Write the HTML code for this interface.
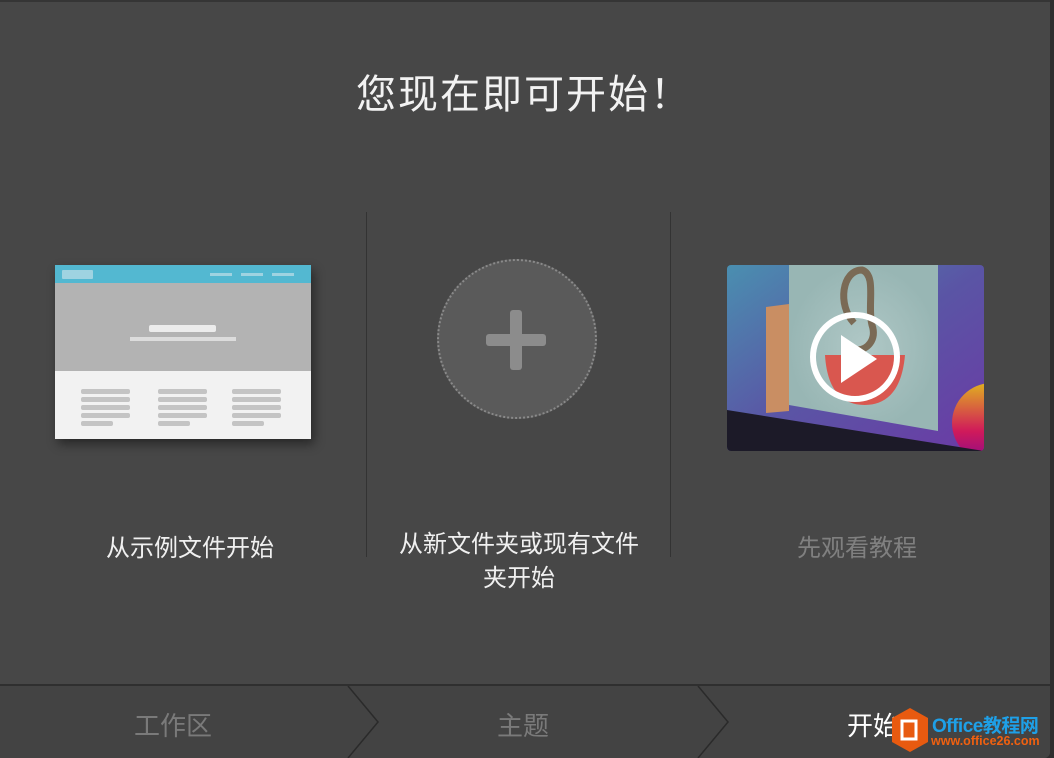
<!DOCTYPE html>
<html><head><meta charset="utf-8">
<style>
*{margin:0;padding:0;box-sizing:border-box}
html,body{width:1054px;height:758px;overflow:hidden}
body{background:#2e2e2e;font-family:"Liberation Sans","Noto Sans CJK SC",sans-serif;position:relative}
.main{position:absolute;left:0;top:0;width:1050px;height:758px;background:#474747;border-radius:0 0 6px 0;overflow:hidden}
.abs{position:absolute;white-space:nowrap}
.title{left:356px;top:62px;color:#f2f2f2;font-size:40px;letter-spacing:2px}
.vline{width:1px;background:#333;top:212px;height:345px}
.lbl{color:#f0f0f0;font-size:24px;text-align:center}
.mock{left:55px;top:265px;width:256px;height:174px;box-shadow:3px 5px 10px rgba(0,0,0,.45)}
.ln{position:absolute;height:5px;background:#c4c4c4;border-radius:2px}
.bar{left:0;top:684px;width:1050px;height:74px;background:#434343;border-top:2px solid #2f2f2f}
.tab{font-size:26px;color:#7a7a7a;top:706px}
</style></head><body>
<div class="main">
<div class="abs" style="left:0;top:0;width:1050px;height:2px;background:#353535"></div>
<div class="abs title">您现在即可开始！</div>
<div class="abs vline" style="left:366px"></div>
<div class="abs vline" style="left:670px"></div>

<div class="abs mock">
 <div class="abs" style="left:0;top:0;width:256px;height:18px;background:#53b8d1"></div>
 <div class="abs" style="left:7px;top:5px;width:31px;height:9px;background:#9fd3e1;border-radius:1px"></div>
 <div class="abs" style="left:155px;top:8px;width:22px;height:3px;background:#9fd3e1"></div>
 <div class="abs" style="left:186px;top:8px;width:22px;height:3px;background:#9fd3e1"></div>
 <div class="abs" style="left:217px;top:8px;width:22px;height:3px;background:#9fd3e1"></div>
 <div class="abs" style="left:0;top:18px;width:256px;height:88px;background:#b3b3b3"></div>
 <div class="abs" style="left:94px;top:60px;width:67px;height:7px;background:#ececec;border-radius:2px"></div>
 <div class="abs" style="left:75px;top:72px;width:106px;height:4px;background:#dcdcdc"></div>
 <div class="abs" style="left:0;top:106px;width:256px;height:68px;background:#f2f2f2"></div>
 <div class="ln" style="left:26px;top:124px;width:49px"></div><div class="ln" style="left:26px;top:132px;width:49px"></div><div class="ln" style="left:26px;top:140px;width:49px"></div><div class="ln" style="left:26px;top:148px;width:49px"></div><div class="ln" style="left:26px;top:156px;width:32px"></div>
 <div class="ln" style="left:103px;top:124px;width:49px"></div><div class="ln" style="left:103px;top:132px;width:49px"></div><div class="ln" style="left:103px;top:140px;width:49px"></div><div class="ln" style="left:103px;top:148px;width:49px"></div><div class="ln" style="left:103px;top:156px;width:32px"></div>
 <div class="ln" style="left:177px;top:124px;width:49px"></div><div class="ln" style="left:177px;top:132px;width:49px"></div><div class="ln" style="left:177px;top:140px;width:49px"></div><div class="ln" style="left:177px;top:148px;width:49px"></div><div class="ln" style="left:177px;top:156px;width:32px"></div>
</div>
<div class="abs lbl" style="left:60px;width:260px;top:528px">从示例文件开始</div>

<div class="abs" style="left:437px;top:259px;width:160px;height:160px;border-radius:50%;background:#5a5a5a;border:2px dotted #8a8a8a"></div>
<div class="abs" style="left:486px;top:334px;width:60px;height:12px;background:#8c8c8c;border-radius:3px"></div>
<div class="abs" style="left:510px;top:310px;width:12px;height:60px;background:#8c8c8c;border-radius:3px"></div>
<div class="abs lbl" style="left:388px;width:262px;top:528px;line-height:34px;white-space:normal">从新文件夹或现有文件<br>夹开始</div>

<svg class="abs" style="left:727px;top:265px" width="257" height="186" viewBox="0 0 257 186">
<defs>
<linearGradient id="g1" x1="0" y1="0" x2="1" y2="1"><stop offset="0" stop-color="#4a8fb0"/><stop offset=".5" stop-color="#5a55a5"/><stop offset="1" stop-color="#6b3aa5"/></linearGradient>
<radialGradient id="g2" cx=".5" cy=".5" r=".5"><stop offset="0" stop-color="#b0c8c6"/><stop offset="1" stop-color="#98b6b4"/></radialGradient>
<linearGradient id="g3" x1="0" y1="0" x2="0" y2="1"><stop offset="0" stop-color="#e0b020"/><stop offset=".6" stop-color="#d01a5a"/><stop offset="1" stop-color="#8a0a8a"/></linearGradient>
<clipPath id="c"><rect width="257" height="186" rx="4"/></clipPath></defs>
<g clip-path="url(#c)">
<rect width="257" height="186" fill="url(#g1)"/>
<polygon points="62,0 211,0 211,166 62,140" fill="url(#g2)"/>
<polygon points="39,42 62,39 62,146 39,148" fill="#c98e63"/>
<circle cx="265" cy="158" r="40" fill="url(#g3)"/>
<polygon points="0,145 257,186 0,186" fill="#1c1a28"/>
<path d="M127 58 C110 40 115 5 135 5 C150 10 140 40 145 60 C150 75 140 85 130 85" stroke="#7a6a55" stroke-width="7" fill="none"/>
<path d="M98 90 L178 90 C175 125 160 140 138 140 C115 140 100 125 98 90Z" fill="#d9574f"/>
<circle cx="128" cy="92" r="42" fill="none" stroke="#fff" stroke-width="6"/>
<polygon points="114,70 114,118 150,94" fill="#fff"/>
</g></svg>
<div class="abs lbl" style="left:727px;width:260px;top:528px;color:#808080">先观看教程</div>

<div class="abs bar"></div>
<svg class="abs" style="left:0;top:686px" width="1050" height="72"><polyline points="348,0 378,36 348,72" fill="none" stroke="#2a2a2a" stroke-width="1.5"/><polyline points="698,0 728,36 698,72" fill="none" stroke="#2a2a2a" stroke-width="1.5"/></svg>
<div class="abs tab" style="left:134px">工作区</div>
<div class="abs tab" style="left:497px">主题</div>
<div class="abs tab" style="left:847px;color:#fff">开始</div>
<svg class="abs" style="left:890px;top:707px" width="40" height="46"><polygon points="20,1 38,11 38,35 20,45 2,35 2,11" fill="#e85a10"/><rect x="12" y="14" width="14" height="18" fill="none" stroke="#fff" stroke-width="3"/></svg>
<div class="abs" style="left:932px;top:711px;font-size:19px;font-weight:bold;color:#1ea0e8;letter-spacing:-0.5px">Office教程网</div>
<div class="abs" style="left:931px;top:734px;font-size:12.5px;font-weight:bold;color:#f06010">www.office26.com</div>
</div>
</body></html>
